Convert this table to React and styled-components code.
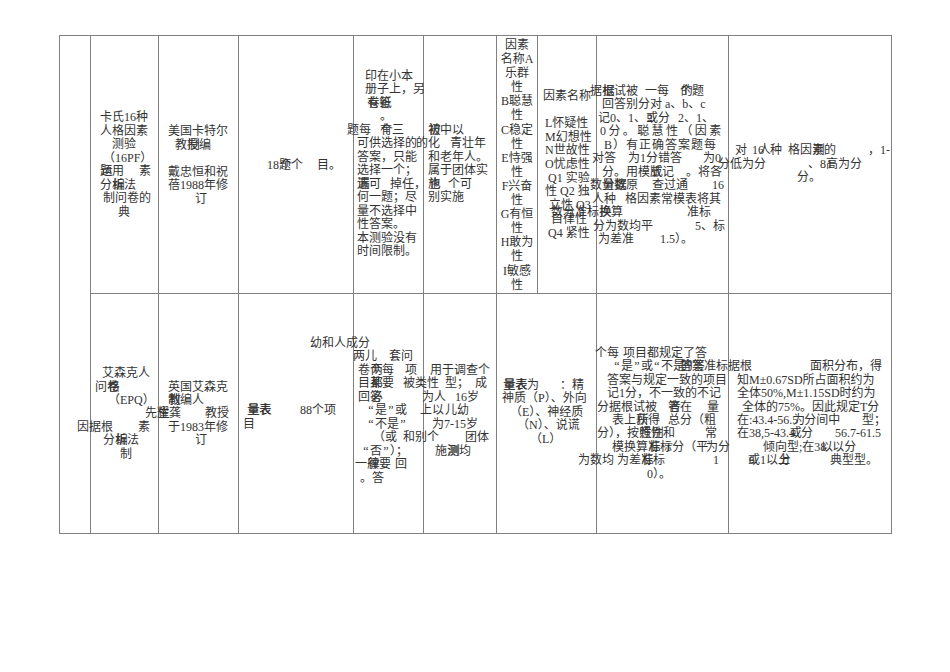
import React from 'react';
import styled, { createGlobalStyle } from 'styled-components';

const Global = createGlobalStyle`
  html, body { margin: 0; padding: 0; background: #fff; }
  body { font-family: "Liberation Serif", "Noto Sans CJK SC", serif; }
`;

const Page = styled.div`
  width: 950px;
  height: 672px;
  box-sizing: border-box;
  padding: 35px 0 0 59px;
  background: #fff;
  overflow: hidden;
`;

const Table = styled.div`
  display: grid;
  width: max-content;
  grid-template-columns: 31px 68px 80px 115px 70px 73px 41px 59px 132px 163px;
  grid-template-rows: 258px 240px;
  border-top: 1px solid #808080;
  border-left: 1px solid #808080;
`;

const Cell = styled.div`
  grid-column: ${(p) => p.$col} / span ${(p) => p.$span || 1};
  grid-row: ${(p) => p.$row} / span ${(p) => p.$rspan || 1};
  box-sizing: border-box;
  border-right: 1px solid #808080;
  border-bottom: 1px solid #808080;
  display: flex;
  flex-direction: column;
  padding-top: ${(p) => p.$pt || 0}px;
  min-width: 0;
`;

const Line = styled.div`
  flex: none;
  display: grid;
  grid-template-columns: minmax(0, 1fr);
  height: 14px;
  margin-top: ${(p) => p.$mt || 0}px;
`;

const Seg = styled.span`
  grid-area: 1 / 1;
  justify-self: ${(p) => (p.$center ? 'center' : 'start')};
  margin-left: ${(p) => (p.$center ? 0 : p.$x)}px;
  letter-spacing: ${(p) => p.$ls || 0}px;
  white-space: pre;
  font-size: 12px;
  line-height: 14px;
  color: #333;
`;

const Ov = styled.span`
  display: inline-grid;
  & > span {
    grid-area: 1 / 1;
  }
  & > span + span {
    transform: translateX(0.7px);
  }
`;

const Quote = styled.span`
  display: inline-block;
  width: 8px;
  text-align: center;
`;

const COL_LEFT = { 1: 60, 2: 91, 3: 159, 4: 239, 5: 354, 6: 424, 7: 497, 8: 538, 9: 597, 10: 729 };
const ROW_TOP = { 1: 36, 2: 294 };

function parse(text) {
  const out = [];
  const re = /\{([^|}]+)\|([^}]+)\}|[“”]/g;
  let last = 0;
  let m;
  let k = 0;
  while ((m = re.exec(text))) {
    if (m.index > last) out.push(text.slice(last, m.index));
    if (m[1]) {
      out.push(
        <Ov key={k++}>
          <span>{m[1]}</span>
          <span>{m[2]}</span>
        </Ov>
      );
    } else {
      out.push(<Quote key={k++}>{m[0]}</Quote>);
    }
    last = m.index + m[0].length;
  }
  if (last < text.length) out.push(text.slice(last));
  return out;
}

const seq = (start, step, items) => items.map((segs, i) => (segs ? [start + i * step, segs] : null)).filter(Boolean);

const cells = [
  { col: 1, row: 1, rspan: 2, lines: [] },
  // Row 1
  {
    col: 2, row: 1,
    lines: [
      [117, [[100, '卡氏16种']]],
      [130.5, [[100, '人格因素']]],
      [144, [[112, '测验']]],
      [157.5, [[103, '（16PF）']]],
      [171, [[100, '{题|运}用'], [139, '素']]],
      [184.5, [[100, '分{析|编}法']]],
      [198, [[103, '制问卷的']]],
      [211.5, [[118, '典']]],
    ],
  },
  {
    col: 3, row: 1,
    lines: [
      [131, [[168, '美国卡特尔']]],
      [144.5, [[175, '教{授|制}编']]],
      [171.5, [[168, '戴忠恒和祝']]],
      [185, [[168, '蓓1988年修']]],
      [198.5, [[195, '订']]],
    ],
  },
  {
    col: 4, row: 1,
    lines: [[164.5, [[267, '18{题|个}个'], [317, '目。']]]],
  },
  {
    col: 5, row: 1,
    lines: seq(75.5, 13.5, [
      [[365, '印在小本']],
      [[365, '册子上，另']],
      [[367, '{有|卷}{答|纸}']],
      [[380, '。']],
      [[347, '题每'], [380, '{有|个}三']],
      [[357, '可供选择的']],
      [[357, '答案，只能']],
      [[357, '选择一个；']],
      [[357, '{遗|漏}可'], [390, '掉任，']],
      [[357, '何一题；尽']],
      [[357, '量不选择中']],
      [[357, '性答案。']],
      [[357, '本测验没有']],
      [[357, '时间限制。']],
    ]),
  },
  {
    col: 6, row: 1,
    lines: seq(129.5, 13.5, [
      [[428, '{初|被}中以']],
      [[416, '的化'], [450, '青壮年']],
      [[428, '和老年人。']],
      [[428, '属于团体实']],
      [[428, '{施|也}'], [448, '个可']],
      [[428, '别实施']],
    ]),
  },
  {
    col: 7, row: 1,
    lines: seq(45, 14.1, [
      '因素', '名称A', '乐群', '性', 'B聪慧', '性', 'C稳定', '性', 'E恃强', '性',
      'F兴奋', '性', 'G有恒', '性', 'H敢为', '性', 'I敏感', '性',
    ].map((t) => [['c', t]])),
  },
  {
    col: 8, row: 1,
    lines: seq(95.5, 13.7, [
      [[543, '因素名称']],
      null,
      [[545, 'L怀疑性']],
      [[545, 'M幻想性']],
      [[545, 'N世故性']],
      [[545, 'O忧虑性']],
      [[548, 'Q1 实验']],
      [[545, '性 Q2 独']],
      [[549, '立性 Q3']],
      [[551, '自律性']],
      [[548, 'Q4 紧性']],
    ]),
  },
  {
    col: 9, row: 1,
    lines: seq(90.5, 13.5, [
      [[590, '据{根|据}试被'], [645, '一每'], [680, '{个|的}题']],
      [[602, '回答别分'], [650, '对 a、b、c']],
      [[598, '记0、1、{或|2}分'], [678, '2、1、']],
      [[600, '0分。聪慧性（因素', 2.4]],
      [[604, 'B）有正确答案题每', 1]],
      [[592, '对答'], [628, '为1分错答'], [703, '为0']],
      [[602, '分。用模{版|式}记'], [686, '。将各']],
      [[590, '数{量|分}{数|据}原'], [652, '查过通'], [712, '16']],
      [[592, '人种'], [625, '格因素常模表将其']],
      [[551, '数分准'], [587, '标{换|换}算'], [687, '准标']],
      [[593, '分为数均平'], [695, '5、标']],
      [[598, '为差准'], [660, '1.5）。']],
    ]),
  },
  {
    col: 10, row: 1,
    lines: [
      [150, [[735, '对'], [752, '1{6|人}种'], [788, '格因{素|测}的'], [868, '，1-']]],
      [163.5, [[718, '分低为分'], [808, '、8{高|1}为分']]],
      [177, [[797, '分。']]],
    ],
  },
  // Row 2
  {
    col: 2, row: 2,
    lines: [
      [373, [[102, '艾森克人']]],
      [386.5, [[95, '问{卷|格}']]],
      [400, [[108, '（EPQ）']]],
      [413, [[145, '先{耀|生}龚']]],
      [426.5, [[77, '因据根'], [138, '素']]],
      [440, [[103, '分{析|编}法']]],
      [453.5, [[120, '制']]],
    ],
  },
  {
    col: 3, row: 2,
    lines: [
      [387, [[168, '英国艾森克']]],
      [400, [[168, '{制|教}编人']]],
      [413, [[205, '教授']]],
      [426.5, [[168, '于1983年修']]],
      [440, [[195, '订']]],
    ],
  },
  {
    col: 4, row: 2,
    lines: [
      [343, [[310, '幼和人成分']]],
      [410, [[247, '{量|量}{表|表}'], [300, '88个项']]],
      [423.5, [[243, '目']]],
    ],
  },
  {
    col: 5, row: 2,
    lines: seq(356, 13.5, [
      [[353, '两儿'], [389, '套问']],
      [[358, '卷{个|两}每'], [405, '项']],
      [[358, '目{某|都}要'], [403, '被类性']],
      [[358, '回{答|必}']],
      [[367, '“是”或']],
      [[367, '“不是”']],
      [[373, '（或'], [403, '和别个']],
      [[362, '“否”）；']],
      [[355, '一{般|律}要'], [395, '回']],
      [[360, '。答']],
    ]),
  },
  {
    col: 6, row: 2,
    lines: seq(369.5, 13.5, [
      [[430, '用于调查个']],
      [[445, '型；'], [475, '成']],
      [[422, '为人'], [455, '16岁']],
      [[420, '上以'], [445, '儿幼']],
      [[432, '为7-15岁']],
      [[465, '团体']],
      [[435, '施{测|测}均']],
    ]),
  },
  {
    col: 7, span: 2, row: 2,
    lines: seq(384.5, 13.6, [
      [[503, '{量|量}{表|表}为'], [560, '：精']],
      [[502, '神质（P）、外向']],
      [[510, '（E）、神经质']],
      [[517, '（N）、说谎']],
      [[530, '（L）']],
    ]),
  },
  {
    col: 9, row: 2,
    lines: seq(353, 13.4, [
      [[595, '个每'], [623, '项目都规定了答']],
      [[613, '“是”或“不是”'], [680, '{答|的}{案|答}准标']],
      [[607, '答案与规定一致的项目']],
      [[607, '记1分，不一致的不记']],
      [[597, '分据根试被'], [668, '{答|者}在'], [707, '量']],
      [[612, '表上{获|所}得'], [668, '总分（粗']],
      [[597, '分），按{照|性}{性|别}和'], [705, '常']],
      [[612, '模换算{准|标}标'], [665, 'T分（平']],
      [[578, '为数均'], [617, '为差{准|标}标'], [713, '1']],
      [[647, '0）。']],
    ]),
  },
  {
    col: 10, row: 2,
    lines: seq(366.4, 13.4, [
      [[728, '据根'], [810, '面积分布，得']],
      [[737, '知M±0.67SD所占面积约为']],
      [[737, '全体50%,M±1.15SD时约为']],
      [[742, '全体的75%。因此规定T分']],
      [[737, '在:43.4-56.{5|为}分间中'], [862, '型；']],
      [[737, '在38,5-43.{4|或}分'], [835, '56.7-61.5']],
      [[706, '为分'], [763, '倾向型;在3{8|以}以分']],
      [[748, '{或|6}1以{上|分}'], [830, '典型型。']],
    ]),
  },
];

function renderCell(cell, idx) {
  const left = COL_LEFT[cell.col];
  const top = ROW_TOP[cell.row];
  const lines = cell.lines;
  const pt = lines.length ? lines[0][0] - 7 - top : 0;
  return (
    <Cell key={idx} $col={cell.col} $row={cell.row} $span={cell.span} $rspan={cell.rspan} $pt={pt}>
      {lines.map(([y, segs], i) => (
        <Line key={i} $mt={i === 0 ? 0 : y - lines[i - 1][0] - 14}>
          {segs.map(([x, text, ls], j) => (
            <Seg key={j} $center={x === 'c'} $x={x === 'c' ? 0 : x - left} $ls={ls}>
              {parse(text)}
            </Seg>
          ))}
        </Line>
      ))}
    </Cell>
  );
}

export default function App() {
  return (
    <>
      <Global />
      <Page>
        <Table>{cells.map(renderCell)}</Table>
      </Page>
    </>
  );
}
